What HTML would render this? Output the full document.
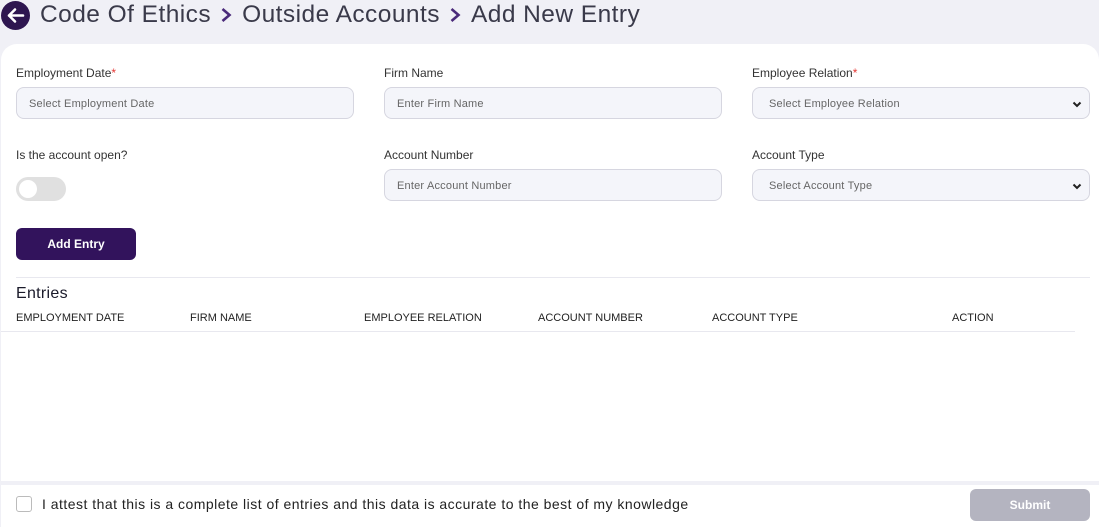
<!DOCTYPE html>
<html><head><style>
*{box-sizing:border-box;margin:0;padding:0}
body{width:1099px;height:527px;background:#f0f0f6;font-family:"Liberation Sans",sans-serif;position:relative;overflow:hidden;color:#2a2a3a}
.a{position:absolute}
.crumb{top:0;left:40px;font-size:24.5px;letter-spacing:0.45px;color:#3a3a4a;line-height:30px;white-space:nowrap;display:flex;align-items:center}
.crumb svg{margin:0 10px 0 9px}
.card{left:1px;top:44px;width:1098px;height:437px;background:#fff;border-radius:16px 16px 0 0}
.foot{left:1px;top:485px;width:1098px;height:42px;background:#fff}
.lbl{font-size:12px;color:#333}
.lbl i{color:#e53935;font-style:normal}
.inp{height:32px;border:1px solid #d6d6e0;border-radius:8px;background:#f4f5fa;font-size:11px;color:#666;padding-left:12px;line-height:32px;width:338px;letter-spacing:0.2px}
.chev{position:absolute;right:6px;top:10px}
.th{font-size:11px;color:#222;top:312px}
</style></head><body>
<svg class="a" style="left:1px;top:1px" width="29" height="29" viewBox="0 0 29 29"><circle cx="14.5" cy="14.5" r="14.5" fill="#2e1650"/><path d="M22 14.5H8M14 8.5l-6 6 6 6" stroke="#fff" stroke-width="2.6" fill="none" stroke-linecap="round" stroke-linejoin="round"/></svg>
<div class="a crumb">Code Of Ethics<svg width="12" height="16" viewBox="0 0 12 16"><path d="M2.5 2l7 6-7 6" stroke="#4a2a7a" stroke-width="2.6" fill="none"/></svg>Outside Accounts<svg width="12" height="16" viewBox="0 0 12 16"><path d="M2.5 2l7 6-7 6" stroke="#4a2a7a" stroke-width="2.6" fill="none"/></svg>Add New Entry</div>
<div class="a card"></div>
<div class="a foot"></div>

<div class="a lbl" style="left:16px;top:66px">Employment Date<i>*</i></div>
<div class="a inp" style="left:16px;top:87px">Select Employment Date</div>
<div class="a lbl" style="left:384px;top:66px">Firm Name</div>
<div class="a inp" style="left:384px;top:87px">Enter Firm Name</div>
<div class="a lbl" style="left:752px;top:66px">Employee Relation<i>*</i></div>
<div class="a inp" style="left:752px;top:87px;padding-left:16px">Select Employee Relation<svg class="chev" width="12" height="12" viewBox="0 0 12 12"><path d="M2.5 4.5L6 8l3.5-3.5" stroke="#222" stroke-width="2" fill="none"/></svg></div>

<div class="a lbl" style="left:16px;top:148px">Is the account open?</div>
<div class="a" style="left:16px;top:177px;width:50px;height:24px;border-radius:12px;background:#e0e0e0"><div style="position:absolute;left:3px;top:3px;width:18px;height:18px;border-radius:50%;background:#fff"></div></div>
<div class="a lbl" style="left:384px;top:148px">Account Number</div>
<div class="a inp" style="left:384px;top:169px">Enter Account Number</div>
<div class="a lbl" style="left:752px;top:148px">Account Type</div>
<div class="a inp" style="left:752px;top:169px;padding-left:16px">Select Account Type<svg class="chev" width="12" height="12" viewBox="0 0 12 12"><path d="M2.5 4.5L6 8l3.5-3.5" stroke="#222" stroke-width="2" fill="none"/></svg></div>

<div class="a" style="left:16px;top:228px;width:120px;height:32px;background:#32135c;border-radius:6px;color:#fff;font-size:12px;font-weight:bold;text-align:center;line-height:32px">Add Entry</div>
<div class="a" style="left:16px;top:277px;width:1074px;height:1px;background:#e8e8ef"></div>
<div class="a" style="left:16px;top:285px;font-size:16px;color:#1a1a2a;letter-spacing:0.3px">Entries</div>
<div class="a th" style="left:16px">EMPLOYMENT DATE</div>
<div class="a th" style="left:190px">FIRM NAME</div>
<div class="a th" style="left:364px">EMPLOYEE RELATION</div>
<div class="a th" style="left:538px">ACCOUNT NUMBER</div>
<div class="a th" style="left:712px">ACCOUNT TYPE</div>
<div class="a th" style="left:952px">ACTION</div>
<div class="a" style="left:1px;top:331px;width:1074px;height:1px;background:#e8e8ef"></div>

<div class="a" style="left:16px;top:496px;width:16px;height:16px;border:1px solid #bbb;border-radius:3px;background:#fff"></div>
<div class="a" style="left:42px;top:496px;font-size:14px;color:#222;letter-spacing:0.48px;white-space:nowrap">I attest that this is a complete list of entries and this data is accurate to the best of my knowledge</div>
<div class="a" style="left:970px;top:489px;width:120px;height:32px;background:#b4b4c0;border-radius:6px;color:#fff;font-size:12px;font-weight:bold;text-align:center;line-height:32px">Submit</div>
</body></html>
